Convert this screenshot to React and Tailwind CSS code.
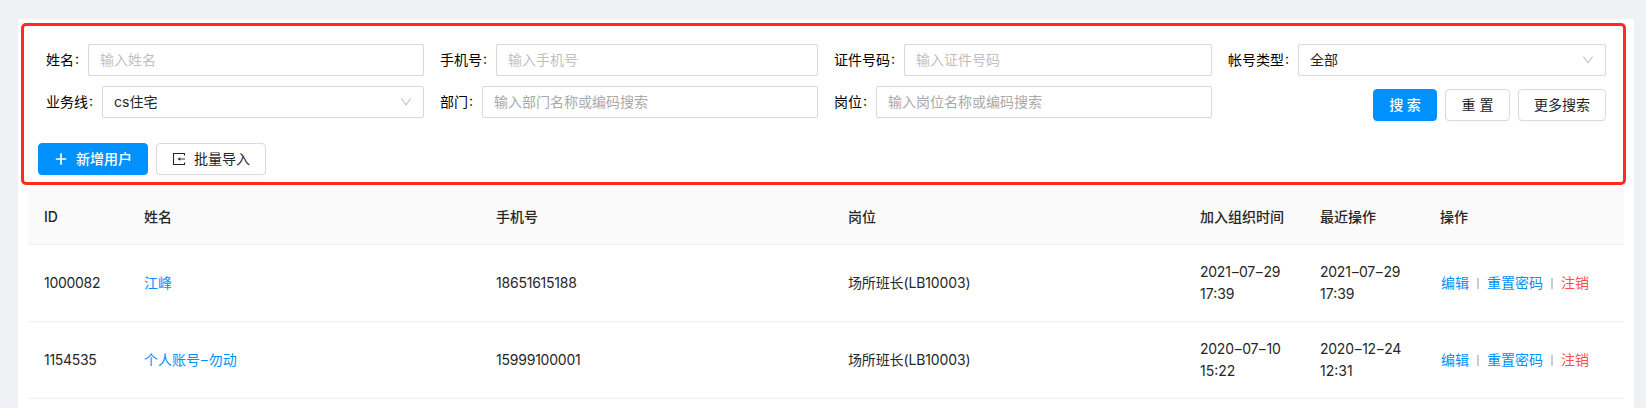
import React from "react";

const box = "flex h-8 min-w-0 flex-1 items-center rounded-[2px] border border-[#d9d9d9] bg-white px-[11px]";

function Chevron() {
  return (
    <svg viewBox="64 64 896 896" className="h-3 w-3 shrink-0 text-[#bfbfbf]" fill="currentColor">
      <path d="M884 256h-75c-5.100 0-9.900 2.500-12.900 6.600L512 654.200 227.900 262.600c-3-4.100-7.800-6.600-12.900-6.600h-75c-6.500 0-10.300 7.400-6.500 12.700l352.600 486.100c12.800 17.600 39 17.600 51.700 0l352.600-486.100c3.900-5.300.1-12.700-6.400-12.700z" />
    </svg>
  );
}

function Field({ label, labelWidth, children }) {
  return (
    <div className="flex h-8 items-center px-2">
      <label className={`${labelWidth} flex shrink-0 text-black`}>
        <span>{label}</span>
        <span className="ml-[1px] -translate-y-px">:</span>
      </label>
      {children}
    </div>
  );
}

function Input({ placeholder, tone = "placeholder:text-[#bfbfbf]" }) {
  return <input className={`${box} ${tone} pb-[2px] outline-none placeholder:opacity-100`} placeholder={placeholder} />;
}

function Select({ value }) {
  return (
    <div className={`${box} justify-between`}>
      <span>{value}</span>
      <Chevron />
    </div>
  );
}

function Button({ primary, className, children }) {
  const look = primary
    ? "border-[#0091ff] bg-[#0091ff] text-white shadow-[0_2px_0_rgba(0,0,0,0.045)]"
    : "border-[#d9d9d9] bg-white shadow-[0_2px_0_rgba(0,0,0,0.016)]";
  return (
    <button className={`flex h-8 items-center justify-center rounded-[4px] border ${look} ${className}`}>
      {children}
    </button>
  );
}

function Dated({ text }) {
  return text.split("-").map((part, i) => (
    <React.Fragment key={i}>
      {i > 0 && <span className="mx-[1.1px] inline-block scale-x-150">-</span>}
      {part}
    </React.Fragment>
  ));
}

const columns = "grid grid-cols-[100px_352px_352px_352px_120px_120px_200px] items-center";

const rows = [
  { id: "1000082", name: "江峰", phone: "18651615188", post: "场所班长(LB10003)", joined: ["2021-07-29", "17:39"], last: ["2021-07-29", "17:39"] },
  { id: "1154535", name: "个人账号-勿动", phone: "15999100001", post: "场所班长(LB10003)", joined: ["2020-07-10", "15:22"], last: ["2020-12-24", "12:31"] },
];

function Stamp({ value }) {
  return (
    <div className="pl-4">
      <div className="tracking-[-0.25px]"><Dated text={value[0]} /></div>
      <div>{value[1]}</div>
    </div>
  );
}

function Divider() {
  return <span className="mx-2 h-[11px] w-[2px] bg-[#ccc]" />;
}

export default function App() {
  return (
    <div className="h-[408px] w-[1646px] overflow-hidden bg-[#f0f1f5] pl-[18px] pt-[19px] font-['Inter','Noto_Sans_CJK_SC',sans-serif] text-[14px] leading-[22px] text-[#262626]">
      <main className="relative h-[389px] w-[1616px] rounded-t-[2px] bg-white px-[10px] pt-[25px]">
        <div className="pointer-events-none absolute left-[3px] top-[4px] h-[162px] w-[1605px] rounded-[5px] border-[3px] border-[#ff2a20]" />
        <section className="h-[146px] px-[10px]">
          <div className="grid grid-cols-4 gap-y-[10px]">
            <Field label="姓名" labelWidth="w-[42px]"><Input placeholder="输入姓名" /></Field>
            <Field label="手机号" labelWidth="w-[56px]"><Input placeholder="输入手机号" /></Field>
            <Field label="证件号码" labelWidth="w-[70px]"><Input placeholder="输入证件号码" /></Field>
            <Field label="帐号类型" labelWidth="w-[70px]"><Select value="全部" /></Field>
            <Field label="业务线" labelWidth="w-[56px]"><Select value="cs住宅" /></Field>
            <Field label="部门" labelWidth="w-[42px]"><Input placeholder="输入部门名称或编码搜索" tone="placeholder:text-[#a9a9a9]" /></Field>
            <Field label="岗位" labelWidth="w-[42px]"><Input placeholder="输入岗位名称或编码搜索" tone="placeholder:text-[#a9a9a9]" /></Field>
            <div className="flex justify-end gap-2 px-2 pt-[3px]">
              <Button primary className="w-16 font-medium">搜 索</Button>
              <Button className="w-[65px]">重 置</Button>
              <Button className="w-[88px]">更多搜索</Button>
            </div>
          </div>
          <div className="mt-[22px] flex gap-2">
            <Button primary className="w-[110px] gap-2 font-medium">
              <svg viewBox="0 0 14 14" className="h-[14px] w-[14px]" stroke="currentColor" strokeWidth="1.700">
                <path d="M7 1.200V12.800M1.800 7H12.200" />
              </svg>
              <span>新增用户</span>
            </Button>
            <Button className="w-[110px] gap-2">
              <svg viewBox="0 0 14 14" className="h-[14px] w-[14px]" fill="none" stroke="currentColor" strokeWidth="1.100">
                <path d="M12.500 3.500V1.500H1.500V12.500H12.500V10.500" />
                <path d="M7 7H13" strokeWidth="0.900" />
                <path d="M5.500 7L8.200 5.200V8.800Z" fill="currentColor" stroke="none" />
              </svg>
              <span>批量导入</span>
            </Button>
          </div>
        </section>
        <section>
          <div className={`${columns} h-[55px] border-b border-[#f0f0f0] bg-[#fafafa] font-medium [&>div]:pl-4`}>
            <div>ID</div>
            <div>姓名</div>
            <div>手机号</div>
            <div>岗位</div>
            <div>加入组织时间</div>
            <div>最近操作</div>
            <div>操作</div>
          </div>
          {rows.map((r) => (
            <div key={r.id} className={`${columns} h-[77px] border-b border-[#f0f0f0]`}>
              <div className="pl-4 tracking-[-0.3px]">{r.id}</div>
              <div className="pl-4 text-[#0091ff]"><Dated text={r.name} /></div>
              <div className="pl-4 tracking-[-0.22px]">{r.phone}</div>
              <div className="pl-4 tracking-[-0.13px]">{r.post}</div>
              <Stamp value={r.joined} />
              <Stamp value={r.last} />
              <div className="flex items-center pl-[17px] text-[#0091ff]">
                <span>编辑</span>
                <Divider />
                <span>重置密码</span>
                <Divider />
                <span className="text-[#ff4d4f]">注销</span>
              </div>
            </div>
          ))}
        </section>
      </main>
    </div>
  );
}
